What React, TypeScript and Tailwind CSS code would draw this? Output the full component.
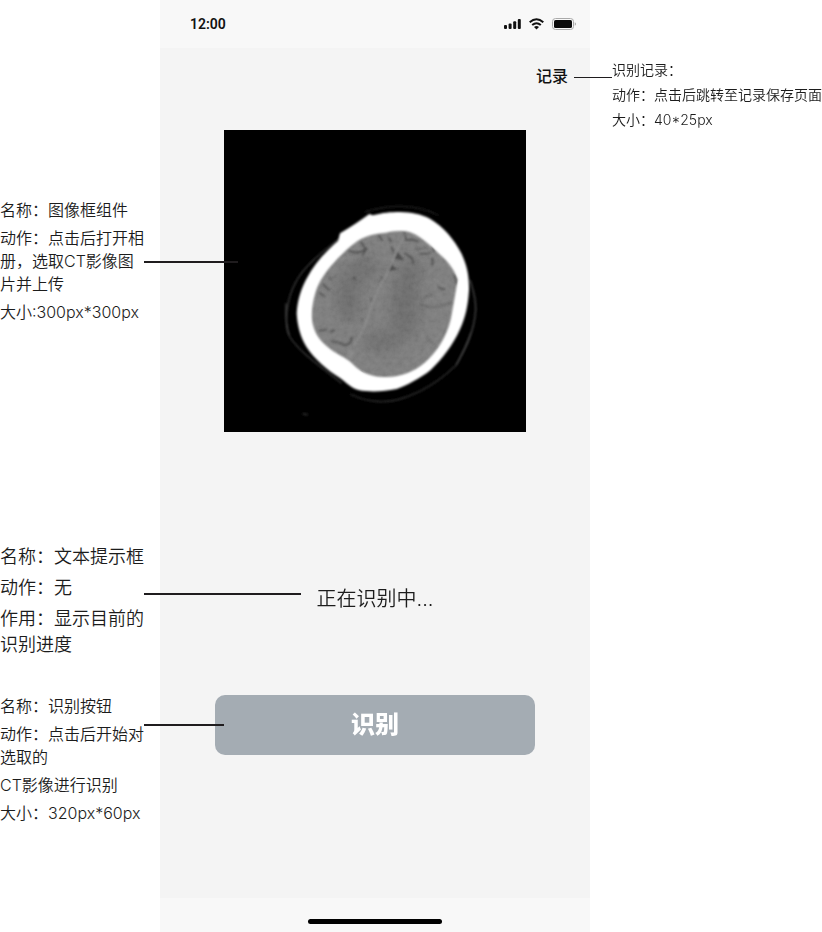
import type { ReactNode } from "react";

const NOTE_FONT = "font-['Inter','Noto_Sans_CJK_SC_DemiLight','Noto_Sans_CJK_SC',sans-serif] font-[350]";
const BUTTON_FONT = "font-['Inter','Noto_Sans_CJK_SC',sans-serif]";

function StatusIcons() {
  return (
    <div className="flex items-center gap-2" aria-hidden="true">
      <svg width="17" height="12" viewBox="0 0 17 12" fill="#111">
        <rect x="0" y="7" width="3" height="4" rx="1" />
        <rect x="4.6" y="5.4" width="3" height="5.6" rx="1" />
        <rect x="9.2" y="3.2" width="3" height="7.8" rx="1" />
        <rect x="13.8" y="1" width="3" height="10" rx="1" />
      </svg>
      <svg width="15" height="12" viewBox="0 0 15 12" fill="none" stroke="#111" strokeWidth="2">
        <path d="M.7 4.3Q7.5-1.7 14.3 4.3" />
        <path d="M3.2 7.1Q7.5 3.4 11.8 7.1" />
        <path d="M7.5 11.4 5 8.9Q7.5 7 10 8.9Z" fill="#111" stroke="none" />
      </svg>
      <svg width="24" height="12" viewBox="0 0 24 12">
        <rect x=".5" y=".5" width="21" height="11" rx="3" fill="none" stroke="#aaa" />
        <rect x="2" y="2" width="18" height="8" rx="1.6" fill="#0b0b0b" />
        <path d="M22.8 4.2v3.6q1-.6 1-1.8t-1-1.8z" fill="#999" />
      </svg>
    </div>
  );
}

const BRAIN =
  "M408 124C380 120 358 126 336 130C300 134 282 143 264 152C240 168 214 194 196 214C165 247 146 276 136 310C126 345 122 380 130 408C138 440 160 462 190 484C215 500 232 505 252 526C276 550 310 562 346 561C390 562 430 546 462 520C500 488 530 440 542 388C550 345 556 310 563 268C552 240 536 215 510 194C482 168 445 130 408 124Z";

function CtScan() {
  return (
    <svg className="block w-full" viewBox="0 0 906 906" role="img" aria-label="CT影像">
      <defs>
        <filter id="soft" x="-5%" y="-5%" width="110%" height="110%">
          <feGaussianBlur stdDeviation="2.5" />
        </filter>
        <filter id="cloud" x="-50%" y="-50%" width="200%" height="200%">
          <feGaussianBlur stdDeviation="22" />
        </filter>
        <filter id="grain" x="0" y="0" width="100%" height="100%">
          <feTurbulence type="fractalNoise" baseFrequency="0.06" numOctaves="3" seed="8" />
          <feColorMatrix values="1 0 0 0 0  1 0 0 0 0  1 0 0 0 0  0 0 0 0 1" />
        </filter>
        <clipPath id="brain">
          <path d={BRAIN} />
        </clipPath>
      </defs>
      <rect width="906" height="906" fill="#000" />
      <g transform="translate(138 180)">
        <g fill="none" filter="url(#soft)">
          <path
            d="M206 148C160 184 105 225 78 275C48 330 42 400 58 438C85 485 160 535 215 580"
            stroke="#3b3b3b"
            strokeWidth="4"
          />
          <path d="M240 612C300 642 360 638 400 624C450 608 510 572 558 526" stroke="#303030" strokeWidth="4" />
          <path d="M558 526C584 480 612 430 617 360C618 320 606 290 600 270" stroke="#484848" strokeWidth="4" />
          <path d="M285 66C350 44 440 40 505 76" stroke="#242424" strokeWidth="4" />
          <path d="M48 340Q46 410 58 435M560 522Q590 465 603 427" stroke="#555" strokeWidth="3" />
          <path d="M98 670q8 5 16 3" stroke="#333" strokeWidth="4" />
        </g>
        <path
          d="M298 72L308 76C340 68 360 66 390 66C425 67 452 72 480 86C520 110 553 148 574 190C590 224 598 256 597 300C594 350 586 382 570 418C548 466 518 506 482 540C450 566 410 586 380 597C340 605 300 607 265 600C240 592 230 578 210 564C170 540 134 508 110 472C92 443 82 410 80 370C82 330 94 294 112 262C134 220 168 184 204 152L210 130C240 112 270 92 298 72Z"
          fill="#fff"
          filter="url(#soft)"
        />
        <path d={BRAIN} fill="#7c7c7c" filter="url(#soft)" />
        <g clipPath="url(#brain)">
          <g filter="url(#cloud)" fill="#5c5c5c" opacity=".6">
            <ellipse cx="405" cy="350" rx="42" ry="100" />
            <ellipse cx="235" cy="320" rx="35" ry="80" />
            <ellipse cx="285" cy="235" rx="45" ry="30" />
            <ellipse cx="335" cy="455" rx="55" ry="30" />
            <ellipse cx="420" cy="250" rx="35" ry="45" />
          </g>
          <rect x="120" y="115" width="450" height="455" filter="url(#grain)" opacity=".09" />
          <g fill="none" stroke="#404040" strokeWidth="5" strokeLinecap="round" filter="url(#soft)" opacity=".75">
            <path d="M238 183Q255 190 270 186L288 178L273 157M290 175L278 195M327 138L337 151" />
            <path d="M365 172L370 185M358 145l5 9M403 130L408 150L424 148L445 154" />
            <path d="M383 190L377 205L396 207ZM366 226L360 240L379 236" fill="#404040" />
            <path d="M404 190L426 204L430 220M450 192L480 190M488 166L492 184M488 205L487 225" />
            <path d="M553 255L561 282M506 291Q514 299 524 297" />
            <path
              d="M450 342Q483 357 508 350L544 338M470 440Q480 457 492 463M466 320l22-5M438 178l28-4"
              strokeWidth="3"
              opacity=".7"
            />
            <path d="M160 284L178 300M148 308L162 318M148 423L168 418M182 425L194 421M184 454L205 457L226 466L241 458L246 442" />
            <path d="M178 266h5M249 264h7M276 389h2M333 263h3M302 327h2M272 545l8 5" />
          </g>
          <g fill="none" stroke="#969696" strokeWidth="4" filter="url(#soft)" opacity=".75">
            <path d="M405 132L378 188L357 238Q320 305 303 352Q288 408 252 467" />
            <path d="M190 214L222 204L266 200M445 164L500 210M490 265L540 300M410 525Q470 493 518 425" opacity=".5" />
            <path d="M246 480L235 504" strokeWidth="20" opacity=".5" />
          </g>
        </g>
      </g>
    </svg>
  );
}

function Leader({ className }: { className: string }) {
  return <span aria-hidden="true" className={`absolute z-10 bg-[#1f1c1e] ${className}`} />;
}

function Note({ className, children }: { className: string; children: ReactNode }) {
  return <section className={`relative flex flex-col gap-[5px] ${className}`}>{children}</section>;
}

export default function App() {
  return (
    <div
      className={`grid min-h-screen grid-cols-[160px_minmax(0,430px)_minmax(210px,1fr)] bg-white text-[#1c1c1c] ${NOTE_FONT}`}
    >
      <aside className="w-36 pt-[199px]">
        <Note className="text-base leading-[23px]">
          <p>名称：图像框组件</p>
          <p>动作：点击后打开相册，选取CT影像图片并上传</p>
          <p>大小:300px*300px</p>
          <Leader className="left-full top-[62px] h-0.5 w-[94px]" />
        </Note>
        <Note className="mt-[220px] text-lg leading-[26px]">
          <p>名称：文本提示框</p>
          <p>动作：无</p>
          <p>作用：显示目前的识别进度</p>
          <Leader className="left-full top-[49px] h-0.5 w-[157px]" />
        </Note>
        <Note className="mt-[37px] text-base leading-[23px]">
          <p>名称：识别按钮</p>
          <p>动作：点击后开始对选取的</p>
          <p>CT影像进行识别</p>
          <p>大小：320px*60px</p>
          <Leader className="left-full top-[29px] h-0.5 w-20" />
        </Note>
      </aside>

      <main className="flex flex-col bg-[#f4f4f4]">
        <header className="flex h-12 items-center justify-between bg-[#f8f8f8] pl-[30px] pr-[14px]">
          <time className="font-[Roboto,sans-serif] text-sm font-semibold text-[#111]">12:00</time>
          <StatusIcons />
        </header>
        <div className="flex flex-1 flex-col items-center pt-4">
          <button
            type="button"
            className={`mr-[22px] self-end text-base text-[#111] ${BUTTON_FONT} font-medium`}
          >
            记录
          </button>
          <button type="button" className="mt-[42px] w-full max-w-[302px]">
            <CtScan />
          </button>
          <p role="status" className="mt-[152px] text-xl leading-[30px]">
            正在识别中...
          </p>
          <button
            type="button"
            className={`mt-[81px] h-[60px] w-full max-w-80 rounded-[10px] bg-[#a4acb3] text-2xl text-white ${BUTTON_FONT} font-black`}
          >
            识别
          </button>
        </div>
        <footer className="flex h-[34px] justify-center bg-[#f8f8f8] pt-[21px]">
          <div className="h-[5px] w-[134px] rounded-full bg-black" />
        </footer>
      </main>

      <aside className="pl-[22px] pt-[60px]">
        <Note className="text-sm leading-5">
          <p>识别记录：</p>
          <p>动作：点击后跳转至记录保存页面</p>
          <p>大小：40*25px</p>
          <Leader className="right-full top-[17px] h-px w-[38px]" />
        </Note>
      </aside>
    </div>
  );
}
